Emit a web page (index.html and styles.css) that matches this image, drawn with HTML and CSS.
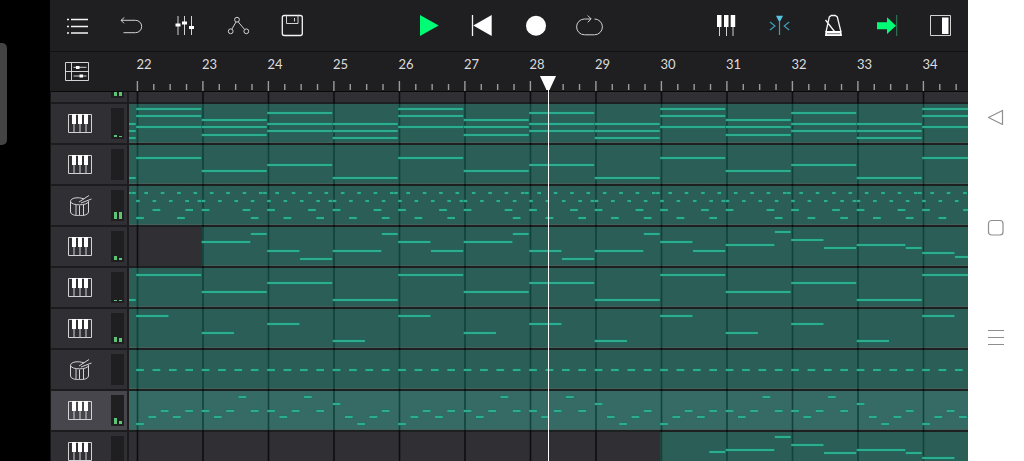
FILE: index.html
```html
<!DOCTYPE html>
<html lang="en">
<head>
<meta charset="utf-8">
<title>Sequencer</title>
<link rel="stylesheet" href="styles.css">
</head>
<body>
<svg class="symbols" aria-hidden="true">
  <symbol id="piano" viewBox="0 0 24 19">
    <path d="M.5.5h23v18H.5zM6 9v10M12 9v10M18 9v10" class="stroke"/>
    <path d="M4 0h4v10H4zM10 0h4v10h-4zM16 0h4v10h-4z" fill="#fff"/>
  </symbol>
  <symbol id="drum" viewBox="0 0 22 21">
    <path d="M14 4C8 1.500.5 3 .5 6.300.5 11 18.500 11 18.500 6.300M.5 6.300V17c0 5 18 5 18 0V6.300M6 10v10M9.500 10.500v10M13.500 10v10M19 .5 9 7M21.500 4 11 8" class="stroke"/>
  </symbol>
</svg>
<main class="screen">
  <aside class="edge"><div class="edge-handle"></div></aside>
  <section class="app">
    <header class="toolbar">
      <div class="group">
        <button class="tool" aria-label="Menu"><svg class="icon" viewBox="0 0 32 32"><path d="M10 9.500h17M10 16.500h17M10 23h17M6 9.500h2M6 16.500h2M6 23h2" class="stroke bold"/></svg></button>
        <button class="tool" aria-label="Undo"><svg class="icon" viewBox="0 0 32 32"><path d="M9.300 7.500 6 10.300l3 3M6 10.300h14.500a6.200 6.200 0 0 1 0 12.400H8.500" class="stroke"/></svg></button>
        <button class="tool" aria-label="Mixer"><svg class="icon" viewBox="0 0 32 32"><path d="M9 6v19M15.500 6v19M22.500 6v19" class="stroke"/><path d="M6.500 13.500h5v3h-5zM13 11.500h5v3h-5zM20 16h5v3h-5z" fill="#fff"/></svg></button>
        <button class="tool" aria-label="Routing"><svg class="icon" viewBox="0 0 32 32"><circle cx="14" cy="9.700" r="2.400" class="stroke"/><circle cx="7.700" cy="21.300" r="2.400" class="stroke"/><circle cx="23.300" cy="21.300" r="2.400" class="stroke"/><path d="m13 12-4.200 7.200M15.300 12l6.300 7.500" class="stroke"/></svg></button>
        <button class="tool" aria-label="Save"><svg class="icon" viewBox="0 0 32 32"><rect x="5.300" y="5.500" width="20" height="20" rx="2" class="stroke bold"/><path d="M9.500 5.500v8h11.500v-8M17.500 8v3.500" class="stroke"/></svg></button>
      </div>
      <div class="group">
        <button class="tool" aria-label="Play"><svg class="icon" viewBox="0 0 32 32"><path d="M8 5v21l18.700-10.500z" fill="#00fb75"/></svg></button>
        <button class="tool" aria-label="Rewind"><svg class="icon" viewBox="0 0 32 32"><path d="M6.500 5v21" class="stroke bold"/><path d="M25.700 5v21L7.300 15.500z" fill="#fff"/></svg></button>
        <button class="tool" aria-label="Record"><svg class="icon" viewBox="0 0 32 32"><circle cx="16" cy="15.700" r="10" fill="#fff"/></svg></button>
        <button class="tool" aria-label="Loop"><svg class="icon" viewBox="0 0 32 32"><path d="M20.500 9a7.900 7.900 0 0 1 0 15.800H10.500A7.900 7.900 0 0 1 10.500 9h6.500M13.700 5.500 17.200 9l-3.500 3.300" class="stroke"/></svg></button>
      </div>
      <div class="group">
        <button class="tool" aria-label="Keyboard"><svg class="icon" viewBox="0 0 32 32"><path d="M10.500 17v9M17.500 17v9M24 17v9" class="stroke"/><path d="M8 5h4.500v12H8zM15 5h4.500v12H15zM21.700 5h4.500v12h-4.500z" fill="#fff"/></svg></button>
        <button class="tool" aria-label="Snap"><svg class="icon" viewBox="0 0 32 32"><path d="M16.500 9v16M7 12l5 4-5 4M26.200 12l-5 4 5 4" class="stroke snap"/><path d="M13 5.700h7l-2.500 5h-2z" fill="#55c4e0"/></svg></button>
        <button class="tool" aria-label="Metronome"><svg class="icon" viewBox="0 0 32 32"><path d="M9 22 12.300 7l2-1.500h4l2 1.500L24 22M8.500 10l9 11.500" class="stroke bold"/><path d="M8.500 21h15.800l.7 5H8z" fill="#fff"/><path d="M10 23.700h13" stroke="#777"/></svg></button>
        <button class="tool" aria-label="Follow playhead"><svg class="icon" viewBox="0 0 32 32"><path d="M6 12.300h10v-5l9 8.400-9 8.400v-4.800H6z" fill="#00fb75"/><path d="M25.700 5v21" stroke="#35805b"/></svg></button>
        <button class="tool" aria-label="Side panel"><svg class="icon" viewBox="0 0 32 32"><path d="M5.500 5.500h20v20h-20z" class="stroke"/><path d="M17 7.500h6.500V24H17z" fill="#fff"/></svg></button>
      </div>
    </header>
    <div class="ruler">
      <button class="ruler-button" aria-label="Track settings"><svg class="arrange-icon" viewBox="0 0 24 19"><path d="M.5.500h23v18H.5zM6.500.500v18M.5 9.500h23M8.500 5.300h13M8.500 14h13" class="stroke"/><path d="M11 4h3.500v3H11zM14.500 12.500H18v3h-3.500z" fill="#fff"/></svg></button>
      <svg class="ruler-scale" id="ruler"></svg>
    </div>
    <div class="viewport"><div class="tracks" id="tracks"></div></div>
    <div class="playhead"><svg class="playhead-cap" viewBox="0 0 16 14"><path d="M0 0h16L9.500 14h-3z" fill="#fff"/></svg></div>
  </section>
  <nav class="system">
    <button class="system-button" aria-label="Back"><svg class="system-icon" viewBox="0 0 16 16"><path d="M14.500.5v14L.5 7.500z"/></svg></button>
    <button class="system-button" aria-label="Home"><svg class="system-icon" viewBox="0 0 16 16"><rect x=".5" y=".5" width="14.500" height="14.500" rx="3"/></svg></button>
    <button class="system-button" aria-label="Recent"><svg class="system-icon" viewBox="0 0 16 16"><path d="M0 .5h16M0 7.500h16M0 14.500h16"/></svg></button>
  </nav>
</main>
<script src="tracks.js"></script>
</body>
</html>
```
FILE: styles.css
```css
* { box-sizing: border-box; }

body {
  margin: 0;
  background: #000;
  font-family: Lato, "Open Sans", sans-serif;
}

button {
  display: flex;
  align-items: center;
  justify-content: center;
  padding: 0;
  border: 0;
  background: none;
}

.symbols { position: absolute; width: 0; height: 0; }

.stroke { fill: none; stroke: #d2d2d4; stroke-width: 1; }
.stroke.bold { stroke: #f4f4f4; stroke-width: 1.3; }
.stroke.snap { stroke: #3f9db8; stroke-width: 1.2; }

.screen {
  display: grid;
  grid-template-columns: 50px 1fr 56px;
  height: 100vh;
  overflow: hidden;
}

.edge { padding-top: 43px; background: #000; }
.edge-handle {
  width: 7px;
  height: 102px;
  border-radius: 0 5px 5px 0;
  background: #444;
}

.app {
  position: relative;
  display: flex;
  flex-direction: column;
  min-width: 0;
  min-height: 0;
  overflow: hidden;
  background: #1f1f21;
}

.toolbar {
  display: flex;
  flex: none;
  justify-content: space-between;
  height: 52px;
  border-bottom: 1px solid #111113;
}
.group { display: flex; }
.tool { width: 54px; height: 52px; }
.icon { width: 32px; height: 32px; }

.ruler {
  display: flex;
  flex: none;
  height: 40px;
  border-bottom: 1px solid #09090a;
}
.ruler-button { width: 54px; }
.arrange-icon { width: 24px; height: 19px; }
.ruler-scale {
  flex: 1;
  height: 39px;
  min-width: 0;
  margin-left: 25px;
}
.tick { fill: #9b9b9d; }
.bar-number { fill: #dcdcde; font-size: 13px; }

.viewport { flex: 1; min-height: 0; overflow: hidden; }
.tracks { margin-top: -29px; }

.track { display: flex; height: 41px; }
.track-head {
  display: flex;
  flex: none;
  align-items: center;
  justify-content: space-between;
  width: 79px;
  padding: 0 3px 0 17px;
  border-right: 2px solid #1c1c1e;
  border-bottom: 2px solid #1c1c1e;
  border-left: 1px solid #141416;
  background: #302f34;
}
.selected .track-head { background: #47464c; }
.piano-icon { width: 24px; height: 19px; }
.drum-icon { width: 22px; height: 21px; margin-left: 2px; }

.meter {
  display: flex;
  align-items: flex-end;
  justify-content: center;
  gap: 2px;
  width: 13px;
  height: 31px;
  padding-bottom: 2px;
  background: #1f1f21;
}
.meter-bar { width: 3px; background: #5cc476; }

.lane { flex: 1; min-width: 0; height: 41px; background: #302f34; }
.divider { fill: #1c2021; }
.grid-line { fill: #0e0e10; }
.clip { fill: #2b5e57; }
.selected .clip { fill: #356b64; }
.clip-edge { fill: #45605b; }
.clip-line { fill: #12423a; }
.note-shade { fill: #12775f; }
.note { fill: #33bb9d; }

.playhead {
  position: absolute;
  top: 76px;
  bottom: 0;
  left: 490px;
  width: 16px;
  background: linear-gradient(#fff, #fff) 8px 0 / 1px 100% no-repeat;
  pointer-events: none;
}
.playhead-cap { display: block; width: 16px; height: 14px; }

.system {
  display: flex;
  flex-direction: column;
  align-items: center;
  justify-content: center;
  padding-bottom: 6px;
  background: #fff;
}
.system-button { width: 56px; height: 110px; }
.system-icon {
  width: 16px;
  height: 16px;
  overflow: visible;
  fill: none;
  stroke: #8e8e8e;
  stroke-width: 1.2;
  stroke-linejoin: round;
}
```
FILE: tracks.js
```js
const FIRST_BAR = 22;
const BAR_WIDTH = 65.5;
const STEP = BAR_WIDTH / 16;
const ORIGIN = 7.4;

const barX = (bar) => ORIGIN + (bar - FIRST_BAR) * BAR_WIDTH;
// Patterns repeat every four bars, counted from bar 22.
const phase = (bar) => (bar - FIRST_BAR + 4) % 4;

// A note is [y, first step, length in steps].
const long = (...rows) => rows.map((y) => [y, 0, 16]);

const chords = [long(4, 11, 22), long(15, 22, 30), long(8, 19, 26), long(19, 26, 33)];
const bass = [long(12), long(25), long(19), long(32)];
const pad = [long(6), long(23), long(14), long(31)];
const stabs = [[[6, 0, 8]], [[23, 0, 8]], [[14, 0, 8]], [[31, 0, 8]]];
const arp = [
  [[32, 0, 2], [25, 3, 2], [19, 6, 2], [25, 9, 2], [19, 12, 2]],
  [[19, 0, 2], [25, 3, 2], [19, 6, 2], [5, 9, 2], [19, 12, 2]],
  [[19, 0, 2], [25, 3, 2], [19, 6, 2], [5, 9, 2], [19, 12, 2]],
  [[12, 0, 2], [25, 3, 2], [32, 6, 2], [25, 9, 2], [19, 12, 2]],
];
const lead = [
  [[14, 0, 8], [23, 8, 8]],
  [[14, 0, 12], [6, 12, 4]],
  [[23, 0, 8], [31, 8, 8]],
  [[23, 0, 12], [6, 12, 4]],
];
const ending = {
  31: [[17, 0, 12], [4, 12, 4]],
  32: [[12, 0, 8], [20, 8, 8]],
  33: [[17, 0, 12], [20, 12, 4]],
  34: [[25, 0, 8], [29, 8, 8]],
};

function drumNotes(bar) {
  const hits = [2, 6, 10, 14].map((s) => [6, s, 1]);
  [0, 4, 8, 12].forEach((s) => hits.push([14, s, 1]));
  hits.push([bar % 2 ? 6 : 14, 15, 1]);
  if (bar < FIRST_BAR) return hits;
  const snare = bar === FIRST_BAR ? [4, 12] : [0, 10];
  const kick = bar === FIRST_BAR ? [0, 10] : phase(bar) === 1 ? [12] : [4, 12];
  snare.forEach((s) => hits.push([23, s, 2]));
  kick.forEach((s) => hits.push([31, s, 2]));
  return hits;
}

const tracks = [
  { icon: "piano", meter: [7, 7] },
  { icon: "piano", meter: [2, 1], start: 21, notes: (b) => chords[phase(b)] },
  { icon: "piano", meter: [0, 0], start: 21, notes: (b) => bass[phase(b)] },
  { icon: "drum", meter: [7, 7], start: 21, notes: drumNotes },
  { icon: "piano", meter: [4, 2], start: 23, notes: (b) => ending[b] || lead[phase(b)] },
  { icon: "piano", meter: [1, 1], start: 21, notes: (b) => pad[phase(b)] },
  { icon: "piano", meter: [5, 4], start: 21, notes: (b) => stabs[phase(b)] },
  { icon: "drum", meter: [0, 0], start: 21, notes: (b) => b < 22 ? [] : [0, 4, 8, 12].map((s) => [19, s, 2]) },
  { icon: "piano", meter: [6, 3], start: 21, selected: true, notes: (b) => b < 22 ? [] : arp[phase(b)] },
  { icon: "piano", meter: [0, 0], start: 30, notes: (b) => ending[b] || (b === 30 ? [[19, 12, 4]] : []) },
];

const rect = (cls, x, y, w, h) =>
  `<rect class="${cls}" x="${x}" y="${y}" width="${w}" height="${h}"/>`;

function drawLane(track, lastBar) {
  let out = rect("divider", 0, 39, "100%", 2);
  for (let b = FIRST_BAR; b <= lastBar; b++) out += rect("grid-line", barX(b) + 0.3, 0, 1.6, 41);
  if (!track.notes) return out;
  const left = Math.max(0, barX(track.start));
  out += rect("clip", left, 0, "100%", 39) + rect("clip-edge", left, 38, "100%", 1);
  for (let b = track.start; b <= lastBar; b++) {
    if (barX(b) >= left) out += rect("clip-line", barX(b) + 0.3, 0, 1.6, 39);
  }
  for (let b = track.start; b <= lastBar; b++) {
    for (const [y, step, length] of track.notes(b)) {
      const x = barX(b) + step * STEP - 0.2;
      const w = length * STEP - 0.5;
      out += rect("note-shade", x, y - 0.4, w, 2.8) + rect("note", x, y + 0.2, w, 1.6);
    }
  }
  return out;
}

function drawRuler(lastBar) {
  let out = "";
  for (let b = FIRST_BAR; b <= lastBar; b++) {
    out += `<text class="bar-number" x="${barX(b)}" y="17">${b}</text>`;
    out += rect("tick", barX(b) + 0.3, 29, 1.4, 10);
    for (let i = 1; i < 4; i++) out += rect("tick", barX(b) + 0.3 + i * 4 * STEP, 32, 1.4, 6);
  }
  return out;
}

document.getElementById("tracks").innerHTML = tracks.map((t) => `
  <div class="track${t.selected ? " selected" : ""}">
    <div class="track-head">
      <svg class="${t.icon}-icon"><use href="#${t.icon}"/></svg>
      <div class="meter">${t.meter.map((h) => `<div class="meter-bar" style="height:${h}px"></div>`).join("")}</div>
    </div>
    <svg class="lane"></svg>
  </div>`).join("");

function draw() {
  const ruler = document.getElementById("ruler");
  const width = ruler.getBoundingClientRect().width;
  const lastBar = FIRST_BAR + Math.floor((width - ORIGIN - 16) / BAR_WIDTH);
  ruler.innerHTML = drawRuler(lastBar);
  document.querySelectorAll(".lane").forEach((lane, i) => {
    lane.innerHTML = drawLane(tracks[i], lastBar);
  });
}

draw();
window.addEventListener("resize", draw);
```
